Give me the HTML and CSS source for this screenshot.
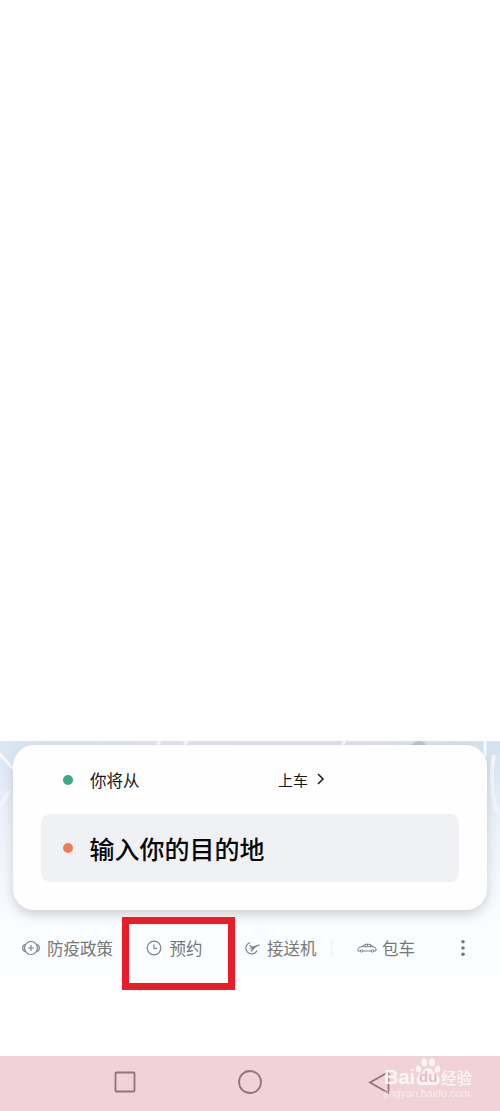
FILE: index.html
```html
<!DOCTYPE html>
<html lang="zh-CN">
<head>
<meta charset="utf-8">
<title>预约</title>
<link rel="stylesheet" href="styles.css">
</head>
<body>
<main class="screen">
  <section class="booking">
    <svg class="map" viewBox="0 0 500 234" aria-hidden="true">
      <path d="M-2 11 14 29M160 0l-3 4M187 0l-3 4M345 0l-3 4M485 0v16" stroke="#f8fbff" stroke-width="3" fill="none"/>
      <path d="M494 14q-5 25 2 56M0 66l10-17" stroke="#f5f6ff" stroke-width="4" fill="none"/>
      <circle cx="419" cy="9" r="9" fill="#b9c4ca"/>
    </svg>
    <div class="card">
      <div class="pickup">
        <i class="dot green"></i>
        <span class="from">你将从</span>
        <span class="board">上车</span>
        <svg class="chevron" width="8" height="12" viewBox="0 0 8 12"><path d="m1 1 5 5L1 11" fill="none" stroke="#222" stroke-width="1.6"/></svg>
      </div>
      <div class="destination">
        <i class="dot orange"></i>
        <span>输入你的目的地</span>
      </div>
    </div>
    <nav class="services">
      <a class="service policy">
        <svg width="18" height="16" viewBox="0 0 18 16"><circle cx="9" cy="8" r="6.5"/><path d="M9 5v6M6 8h6M3 4.5Q.7 5 .7 8T3 11.5M15 4.5q2.300.5 2.300 3.500T15 11.500"/></svg>
        <span>防疫政策</span>
      </a>
      <a class="service reserve">
        <svg width="16" height="16" viewBox="0 0 16 16"><circle cx="8" cy="8" r="6.800"/><path d="M8 4.500V8.500h3"/></svg>
        <span>预约</span>
      </a>
      <a class="service airport">
        <svg width="17" height="16" viewBox="0 0 17 16"><path d="M6.300 2.500a5.800 5.800 0 1 0 6.700 8"/><path class="plane" d="m4.800 5.200 1.200-.2 2.500 1.500 7.200-2.300.3.800-5 2.700-3.500 4-.8.200 1-3.300-2 .1.100-.8 1.700-.5Z"/></svg>
        <span>接送机</span>
      </a>
      <a class="service charter">
        <svg width="20" height="12" viewBox="0 0 20 12"><path d="M3.200 9H1V7q0-2 4-2.500Q7 2 10.500 2T16 4.700q3 .5 3 2.500v1.800h-2.200M5.800 9h8.400M5 4.700h11M10.500 2v2.700M7.500 4.500l1-2M12.800 2.300l1.200 2.200"/><circle cx="4.500" cy="9" r="1.200"/><circle cx="15.500" cy="9" r="1.200"/></svg>
        <span>包车</span>
      </a>
      <svg class="more" width="6" height="18" viewBox="0 0 6 18"><circle cx="3" cy="2.800" r="1.800"/><circle cx="3" cy="9" r="1.800"/><circle cx="3" cy="15.300" r="1.800"/></svg>
    </nav>
    <div class="highlight"></div>
  </section>
  <footer class="system-bar">
    <svg class="square" width="22" height="22" viewBox="0 0 22 22"><rect x="1.500" y="1.500" width="19" height="19" rx="1"/></svg>
    <svg class="circle" width="24" height="24" viewBox="0 0 24 24"><circle cx="12" cy="12" r="11"/></svg>
    <svg class="back" width="23" height="25" viewBox="0 0 23 25"><path d="M20.500 2v21L2 12.500Z"/></svg>
    <div class="watermark">
      <div class="brand">
        <span class="bai">Bai</span>
        <span class="paw">
          <svg width="26" height="29" viewBox="0 0 26 29"><ellipse cx="3.500" cy="12" rx="2.700" ry="3.500" transform="rotate(-15 3.500 12)"/><ellipse cx="9.200" cy="5.500" rx="2.900" ry="4"/><ellipse cx="17" cy="5.500" rx="2.900" ry="4"/><ellipse cx="22.500" cy="12" rx="2.700" ry="3.500" transform="rotate(15 22.500 12)"/><path d="M13 11c-4 0-4 4-8 6-6 4-3 11 1 11h14c5 0 7-7 1-11-4-2-4-6-8-6Z"/></svg>
          <span class="du">du</span>
        </span>
        <span class="jingyan">经验</span>
      </div>
      <div class="site">jingyan.baidu.com</div>
    </div>
  </footer>
</main>
</body>
</html>
```
FILE: styles.css
```css
* { box-sizing: border-box; }
body { margin: 0; background: #fff; font-family: "Noto Sans CJK SC", sans-serif; }
.screen { display: flex; flex-direction: column; width: 500px; height: 1111px; padding-top: 741px; overflow: hidden; }
.booking {
  position: relative;
  height: 234px;
  padding: 4px 13px 0;
  background: linear-gradient(90deg, #d9e5f4 0, #dfe4ef 30%, #dde1eb 75%, #d2e2f0 100%);
}
.booking::before {
  content: "";
  position: absolute;
  inset: 0;
  background: linear-gradient(#fafdff00 0, #f4f5fccc 80px, #fafdff 180px);
}
.map { position: absolute; inset: 0; width: 500px; height: 234px; }
.card {
  position: relative;
  width: 474px;
  height: 165px;
  padding: 0 28px;
  border-radius: 21px;
  background: #fefefe;
  box-shadow: 0 5px 12px #8d929b65;
}
.pickup { display: flex; align-items: center; height: 69px; padding: 1px 0 0 22px; color: #161616; }
.dot { width: 10px; height: 10px; border-radius: 50%; flex: none; }
.green { background: #3aaa80; }
.orange { background: #ef7d51; }
.from { width: 188px; margin-left: 17px; font-size: 16.5px; line-height: 24px; }
.board { width: 31px; font-size: 15px; line-height: 24px; }
.chevron { margin: -2px 0 0 8px; }
.destination {
  display: flex;
  align-items: center;
  gap: 16.5px;
  height: 68px;
  padding-left: 22px;
  border-radius: 9px;
  background: #f0f1f4;
  color: #080808;
  font-size: 25px;
  font-weight: 500;
  line-height: 36px;
}
.services { position: relative; display: flex; align-items: center; height: 66px; margin-top: 5px; color: #777; font-size: 16.5px; line-height: 24px; }
.service { display: flex; align-items: center; height: 24px; white-space: nowrap; flex: none; }
.service svg { fill: none; stroke: #808080; stroke-width: 1.2; flex: none; }
.service .plane { fill: #808080; stroke: none; }
.policy { width: 111px; margin-left: 9px; gap: 7px; }
.policy span { width: 67px; }
.reserve { width: 111px; padding-left: 13px; gap: 7.5px; }
.airport { width: 88px; height: 16px; gap: 6px; margin-right: 25px; border-right: 1px solid #edf1f3; }
.charter { gap: 5px; }
.charter svg { stroke-width: 1; }
.more { margin-left: 45px; fill: #777; }
.highlight { position: absolute; left: 122px; top: 176px; width: 113px; height: 73px; border: 7px solid #e91c27; }
.system-bar { position: relative; display: flex; align-items: center; height: 55px; margin-top: 81px; padding: 0 0 3px 114px; background: #f0d2d8; flex: none; }
.system-bar > svg { fill: none; stroke: #8b777e; stroke-width: 1.8; }
.circle { margin-left: 102px; }
.back { margin-left: 106px; }
.watermark { position: absolute; left: 384px; top: 1px; width: 92px; height: 42px; color: #fff; opacity: .82; }
.brand { display: flex; align-items: flex-end; height: 31px; }
.bai { width: 31px; font: 700 20px/22px "Liberation Sans", sans-serif; }
.paw { position: relative; width: 26px; height: 31px; flex: none; }
.paw svg { display: block; fill: #fff; }
.du { position: absolute; left: 4px; top: 12px; color: #e5b7c0; font: 700 15px/15px "Liberation Sans", sans-serif; }
.jingyan { font-size: 15.5px; font-weight: 500; line-height: 22px; }
.site { opacity: .7; font: 10.7px/11px "Liberation Sans", sans-serif; white-space: nowrap; }
```
